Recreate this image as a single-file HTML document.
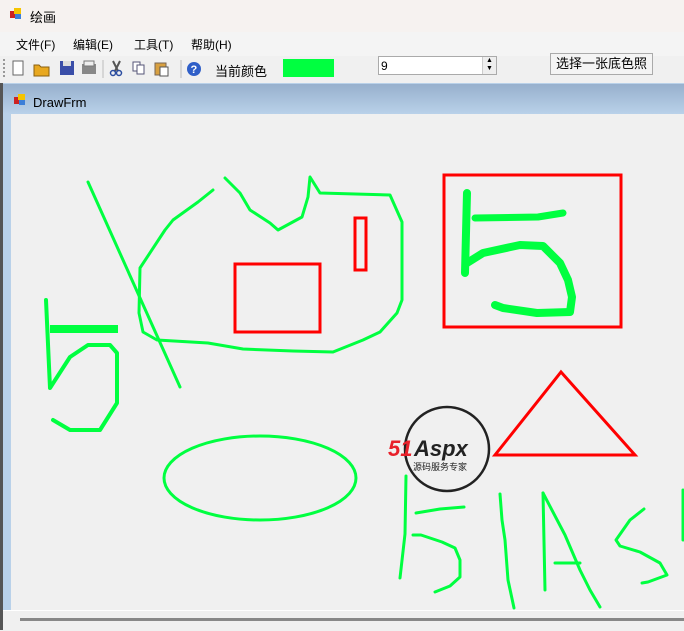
<!DOCTYPE html>
<html><head><meta charset="utf-8"><style>
body{margin:0;width:684px;height:630px;overflow:hidden;background:#f0f0f0;font-family:"Liberation Sans","Noto Sans CJK SC",sans-serif;font-size:12px;position:relative}
.a{position:absolute}
</style></head><body>
<div class="a" style="left:0;top:0;width:684px;height:32px;background:#f6f2f0"></div>
<div class="a" style="left:10px;top:8px;width:12px;height:12px"><div class="a" style="left:0;top:3px;width:5px;height:7px;background:#c22"></div><div class="a" style="left:4px;top:0;width:7px;height:6px;background:#f5c400"></div><div class="a" style="left:5px;top:6px;width:6px;height:5px;background:#3c7fd8"></div></div>
<div class="a" style="left:30px;top:7px;font-size:13px">绘画</div>
<div class="a" style="left:0;top:32px;width:684px;height:24px;background:#f4f4f4"></div>
<div class="a" style="left:16px;top:36px">文件(F)</div>
<div class="a" style="left:73px;top:36px">编辑(E)</div>
<div class="a" style="left:134px;top:36px">工具(T)</div>
<div class="a" style="left:191px;top:36px">帮助(H)</div>
<div class="a" style="left:0;top:56px;width:684px;height:26px;background:#f0f0f0"></div>
<div class="a" style="left:3px;top:59px;width:2px;height:18px;border-left:2px dotted #999"></div>
<svg class="a" style="left:10px;top:58px" width="200" height="22">
<rect x="3" y="3" width="10" height="14" fill="#fff" stroke="#666"/>
<path d="M24 7h5l2 2h8v9H24z" fill="#e8a820" stroke="#8a6010"/>
<rect x="50" y="3" width="14" height="14" fill="#3a4ea8"/><rect x="53" y="3" width="8" height="5" fill="#ddd"/>
<rect x="72" y="6" width="14" height="10" fill="#888"/><rect x="74" y="3" width="10" height="5" fill="#eee" stroke="#777"/>
<line x1="93" y1="2" x2="93" y2="20" stroke="#bbb"/>
<path d="M103 3l5 10M110 3l-5 10" stroke="#555" stroke-width="2"/><circle cx="103" cy="15" r="2.5" fill="none" stroke="#2a4ca0" stroke-width="1.5"/><circle cx="109" cy="15" r="2.5" fill="none" stroke="#2a4ca0" stroke-width="1.5"/>
<rect x="123" y="4" width="7" height="9" fill="#fff" stroke="#557"/><rect x="127" y="7" width="7" height="9" fill="#fff" stroke="#557"/>
<rect x="145" y="5" width="11" height="12" fill="#d8a040" stroke="#765"/><rect x="150" y="9" width="8" height="9" fill="#fff" stroke="#555"/>
<line x1="171" y1="2" x2="171" y2="20" stroke="#bbb"/>
<circle cx="184" cy="11" r="7" fill="#2f5fc8"/><text x="180.5" y="15" font-size="11" fill="#fff" font-weight="bold" font-family="Liberation Sans">?</text>
</svg>
<div class="a" style="left:215px;top:61px;font-size:13px">当前颜色</div>
<div class="a" style="left:283px;top:59px;width:51px;height:18px;background:#00ff40"></div>
<div class="a" style="left:378px;top:56px;width:119px;height:19px;background:#fff;border:1px solid #aaa;box-sizing:border-box"><span class="a" style="left:2px;top:2px">9</span><div class="a" style="right:0;top:0;width:13px;height:17px;background:#eee;border-left:1px solid #ccc;font-size:7px;line-height:8px;text-align:center">▲<br>▼</div></div>
<div class="a" style="left:550px;top:53px;width:103px;height:22px;background:#f4f4f4;border:1px solid #aaa;box-sizing:border-box;text-align:center;line-height:19px;font-size:13px">选择一张底色照</div>
<div class="a" style="left:0;top:83px;width:684px;height:547px;background:#b9d1e9;border-left:3px solid #555;box-sizing:border-box"></div>
<div class="a" style="left:3px;top:84px;width:681px;height:30px;background:linear-gradient(#97b0cd,#b9d1e9)"></div>
<div class="a" style="left:14px;top:94px;width:12px;height:12px"><div class="a" style="left:0;top:3px;width:5px;height:7px;background:#c22"></div><div class="a" style="left:4px;top:0;width:7px;height:6px;background:#f5c400"></div><div class="a" style="left:5px;top:6px;width:6px;height:5px;background:#3c7fd8"></div></div>
<div class="a" style="left:33px;top:95px;font-size:13px">DrawFrm</div>
<div class="a" style="left:3px;top:610px;width:681px;height:20px;background:#f0f0f0;border-top:1px solid #fff"></div>
<div class="a" style="left:20px;top:618px;width:664px;height:3px;background:#888"></div>
<svg class="a" style="left:11px;top:114px" width="673" height="496" viewBox="11 114 673 496">
<rect x="11" y="114" width="673" height="496" fill="#f0f0f0"/>
<g fill="none" stroke="#00ff40" stroke-width="3" stroke-linejoin="round" stroke-linecap="round">
<path d="M88 182L180 387"/>
<path d="M213 190L198 202L173 220L165 230L140 268L139 313L143 332L157 340L208 343L243 349L293 351L333 352L363 340L380 332L397 313L402 300L402 222L390 195L320 193L310 177L308 197L302 217L278 230L270 223L250 210L240 193L225 178"/>
<path d="M46 300L50 388L70 357L88 345L110 345L117 353L117 403L100 430L70 430L53 420" stroke-width="4"/>
<path d="M50 329H118" stroke-width="8" stroke-linecap="butt"/>
<path d="M467 193L465 273" stroke-width="8"/>
<path d="M475 218L538 217L563 213" stroke-width="7"/>
<path d="M467 263L483 253L520 245L543 246L560 263L568 280L572 297L570 312L537 313L503 308L495 305" stroke-width="8"/>
<ellipse cx="260" cy="478" rx="96" ry="42"/>
<path d="M406 476L405 534L400 578"/>
<path d="M416 513L440 509L464 507"/>
<path d="M413 535L421 535L442 542L455 548L460 560L460 577L450 586L435 592"/>
<path d="M500 494L502 520L505 540L508 580L514 608"/>
<path d="M543 493L545 590"/>
<path d="M543 493L565 535L580 570L590 590L600 607M555 563H580"/>
<path d="M644 509L630 520L616 540L620 546L640 552L660 563L667 575L648 582L642 583"/>
<path d="M683 490V540"/>
</g>
<g fill="none" stroke="#f00" stroke-width="3">
<rect x="235" y="264" width="85" height="68"/>
<rect x="355" y="218" width="11" height="52"/>
<rect x="444" y="175" width="177" height="152"/>
<path d="M561 372L635 455H495Z"/>
</g>
<circle cx="447" cy="449" r="42" fill="none" stroke="#222" stroke-width="2.5"/>
<text x="388" y="456" font-size="22" font-weight="bold" font-style="italic" fill="#e8202a" font-family="Liberation Sans">51</text>
<text x="414" y="456" font-size="22" font-weight="bold" font-style="italic" fill="#222" font-family="Liberation Sans">Aspx</text>
<text x="413" y="470" font-size="9" fill="#222" font-family="Noto Sans CJK SC">源码服务专家</text>
</svg>
</body></html>
